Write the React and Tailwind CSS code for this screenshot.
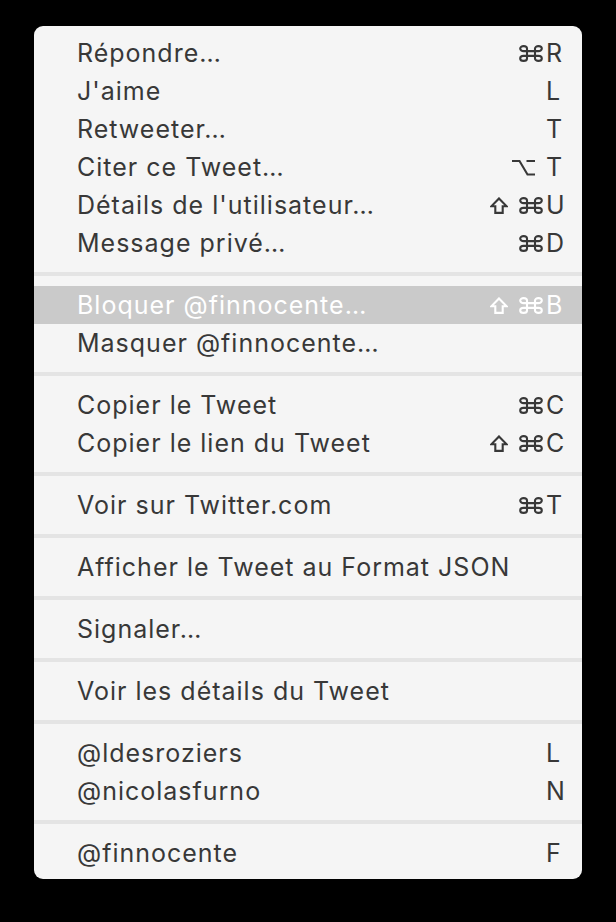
import React from "react";

function Cmd() {
  return (
    <svg width="24" height="17" viewBox="0 0 24 17" fill="none" stroke="currentColor" strokeWidth="2.1" className="ml-[11px] block">
      <path d="M16 3.6V13.4A3.4 2.5 0 1 0 19.4 10.9H4.6A3.4 2.5 0 1 0 8 13.4V3.6A3.4 2.5 0 1 0 4.6 6.1H19.4A3.4 2.5 0 1 0 16 3.6Z" />
    </svg>
  );
}

function Shift() {
  return (
    <svg width="18" height="17" viewBox="0 0 18 17" fill="none" stroke="currentColor" strokeWidth="2.1" strokeLinejoin="miter" className="block">
      <path d="M9 1.4L16.7 9.3H12.7V15.9H5.3V9.3H1.3Z" />
    </svg>
  );
}

function Opt() {
  return (
    <svg width="23" height="17" viewBox="0 0 23 17" fill="none" stroke="currentColor" strokeWidth="2.1" className="block mr-[8px]">
      <path d="M0 2H7.5L15.5 15.5H23M14.5 2H23" />
    </svg>
  );
}

const groups = [
  [
    ["Répondre…", ["cmd"], "R"],
    ["J'aime", [], "L"],
    ["Retweeter…", [], "T"],
    ["Citer ce Tweet…", ["opt"], "T"],
    ["Détails de l'utilisateur…", ["shift", "cmd"], "U"],
    ["Message privé…", ["cmd"], "D"],
  ],
  [
    ["Bloquer @finnocente…", ["shift", "cmd"], "B", true],
    ["Masquer @finnocente…", [], ""],
  ],
  [
    ["Copier le Tweet", ["cmd"], "C"],
    ["Copier le lien du Tweet", ["shift", "cmd"], "C"],
  ],
  [["Voir sur Twitter.com", ["cmd"], "T"]],
  [["Afficher le Tweet au Format JSON", [], ""]],
  [["Signaler…", [], ""]],
  [["Voir les détails du Tweet", [], ""]],
  [
    ["@ldesroziers", [], "L"],
    ["@nicolasfurno", [], "N"],
  ],
  [["@finnocente", [], "F"]],
];

function Row({ label, mods, keyc, active }) {
  return (
    <div
      className={
        "flex h-[38px] items-center pl-[43px] pr-[19px] " +
        (active ? "bg-[#cacaca] text-white" : "text-[#383838]")
      }
    >
      <span className="flex-1 whitespace-nowrap">{label}</span>
      <span className="flex items-center">
        <span className="flex items-center pt-[1px]">
          {mods.map((m, i) =>
            m === "cmd" ? <Cmd key={i} /> : m === "shift" ? <Shift key={i} /> : <Opt key={i} />
          )}
        </span>
        <span className="ml-[3px] w-[17px] text-left">{keyc}</span>
      </span>
    </div>
  );
}

export default function App() {
  return (
    <div className="min-h-[922px] w-[616px] bg-black pt-[26px]">
      <div className="mx-[34px] rounded-[9px] bg-[#f5f5f5] pt-[8px] pb-[7px] font-['Inter',sans-serif] text-[25px] leading-none tracking-[1px]">
        {groups.map((g, gi) => (
          <React.Fragment key={gi}>
            {gi > 0 && (
              <div className="flex h-[24px] items-center">
                <div className="h-[4px] w-full bg-[#e4e4e4]" />
              </div>
            )}
            {g.map((r, ri) => (
              <Row key={ri} label={r[0]} mods={r[1]} keyc={r[2]} active={r[3]} />
            ))}
          </React.Fragment>
        ))}
      </div>
    </div>
  );
}
